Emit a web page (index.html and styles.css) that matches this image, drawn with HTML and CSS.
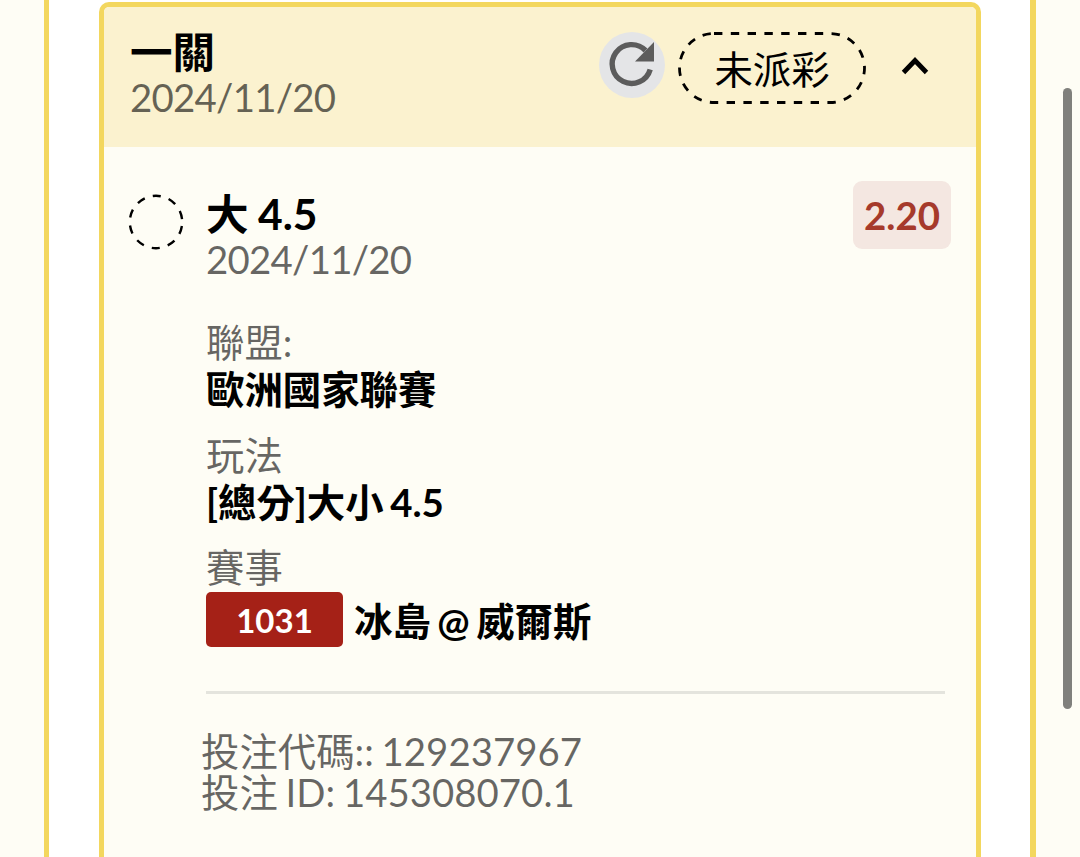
FILE: index.html
```html
<!DOCTYPE html>
<html lang="zh-Hant">

<head>
    <meta charset="UTF-8">
    <meta name="viewport" content="width=device-width, initial-scale=1.0">
    <link rel="stylesheet" href="styles.css">

    <title>投注紀錄</title>
</head>

<body>

    <div class="panel">
        <div class="card">
            <div class="card-header">
                <div class="header-text">
                    <div class="title">一關</div>
                    <div class="date">2024/11/20</div>
                </div>
                <button type="button" class="refresh">
                    <svg width="66" height="66" viewBox="0 0 66 66">
                        <path d="M51.2 37.4A19.4 19.4 0 1 1 46.5 18.5" fill="none" stroke="#5c5c5c" stroke-width="5.4" />
                        <path d="M55 10V29.5H36z" fill="#5c5c5c" />
                    </svg>
                </button>
                <div class="status">
                    <svg class="status-border" width="188" height="72" viewBox="0 0 188 72">
                        <rect x="1.5" y="1.5" width="185" height="69" rx="34.5" fill="none" stroke="#000" stroke-width="2.8" stroke-dasharray="8.4 8.4" />
                    </svg>
                    <span>未派彩</span>
                </div>
                <svg class="chevron" width="28" height="20" viewBox="0 0 28 20">
                    <path d="M2.5 16.5L14 4.5L25.5 16.5" fill="none" stroke="#000" stroke-width="4.8" />
                </svg>
            </div>

            <div class="card-body">
                <svg class="mark" width="56" height="56" viewBox="0 0 56 56">
                    <circle cx="28" cy="28" r="26.2" fill="none" stroke="#000" stroke-width="2.4" stroke-dasharray="8.23 8.23" stroke-dashoffset="-4.1" />
                </svg>
                <div class="detail">
                    <div class="pick">
                        <div>
                            <div class="title">大 4.5</div>
                            <div class="date">2024/11/20</div>
                        </div>
                        <div class="odds">2.20</div>
                    </div>

                    <div class="info">
                        <div class="label">聯盟:</div>
                        <div class="value">歐洲國家聯賽</div>
                    </div>
                    <div class="info">
                        <div class="label">玩法</div>
                        <div class="value">[總分]大小 4.5</div>
                    </div>
                    <div class="info">
                        <div class="label">賽事</div>
                        <div class="match">
                            <span class="match-no">1031</span>
                            <span class="value">冰島 @ 威爾斯</span>
                        </div>
                    </div>

                    <div class="bet-ids">
                        <div>投注代碼:: 129237967</div>
                        <div>投注 ID: 145308070.1</div>
                    </div>
                </div>
            </div>
        </div>
    </div>

    <div class="scrollbar"></div>

</body>

</html>
```

FILE: styles.css
```css
body {
    margin: 0;
    height: 857px;
    background-color: #fefdf5;
    font-family: Lato, "Noto Sans CJK TC", sans-serif;
    font-size: 38.4px;
    color: #000;
}

.panel {
    box-sizing: border-box;
    height: 857px;
    margin: 0 44px;
    padding: 2px 49px 0 50px;
    border-left: 5px solid #f3d75e;
    border-right: 6px solid #f3d75e;
    background-color: #fff;
}

.card {
    box-sizing: border-box;
    height: 855px;
    border: 5px solid #f3d75e;
    border-bottom: none;
    border-radius: 10px 10px 0 0;
    background-color: #fefdf5;
    overflow: hidden;
}

.card-header {
    box-sizing: border-box;
    display: flex;
    align-items: flex-start;
    height: 140px;
    padding: 25px 47px 0 26px;
    background-color: #fbf2cf;
}

.header-text {
    flex: 1;
    margin-top: -3px;
}

.title {
    height: 45px;
    line-height: 46px;
    font-size: 42.6px;
    font-weight: 700;
    word-spacing: -1px;
}

.date {
    height: 46px;
    line-height: 46px;
    color: rgba(0, 0, 0, 0.6);
    letter-spacing: -0.75px;
}

.refresh {
    display: block;
    width: 66px;
    height: 66px;
    margin-right: 13px;
    padding: 0;
    border: none;
    border-radius: 50%;
    background-color: #e4e5e7;
}

.status {
    position: relative;
    width: 188px;
    height: 72px;
    line-height: 74px;
    text-align: center;
}

.status-border {
    position: absolute;
    top: 0;
    left: 0;
}

.chevron {
    margin: 24px 0 0 35px;
}

.card-body {
    display: flex;
    align-items: flex-start;
    padding: 34px 25px 0 24px;
}

.mark {
    margin-top: 13px;
}

.detail {
    flex: 1;
    padding-left: 22px;
}

.pick {
    display: flex;
    justify-content: space-between;
    align-items: flex-start;
    height: 138px;
}

.pick .title {
    margin-top: 10px;
}

.odds {
    width: 98px;
    height: 68px;
    line-height: 69px;
    border-radius: 9px;
    background-color: #f4e7e1;
    color: #a63a2b;
    font-weight: 700;
    text-align: center;
}

.info {
    height: 112.5px;
}

.label {
    height: 47px;
    line-height: 46px;
    color: rgba(0, 0, 0, 0.6);
}

.value {
    height: 46px;
    line-height: 46px;
    font-weight: 700;
    word-spacing: -2.8px;
}

.match {
    display: flex;
    align-items: center;
    gap: 11px;
    height: 55px;
    margin-top: 1px;
}

.match .value {
    line-height: 48px;
}

.match-no {
    width: 137px;
    height: 55px;
    line-height: 56px;
    border-radius: 5px;
    background-color: #a52117;
    color: #fff;
    font-size: 33px;
    font-weight: 700;
    text-align: center;
}

.bet-ids {
    margin: 34px 6px 0 0;
    padding-top: 37px;
    border-top: 3px solid #e4e4dd;
    line-height: 41.5px;
    color: rgba(0, 0, 0, 0.6);
    word-spacing: -2px;
}

.bet-ids div {
    margin-left: -5px;
}

/* floats over the right side of the page */
.scrollbar {
    position: absolute;
    top: 88px;
    left: 1063px;
    width: 9px;
    height: 621px;
    border-radius: 5px;
    background-color: #80807c;
}
```
